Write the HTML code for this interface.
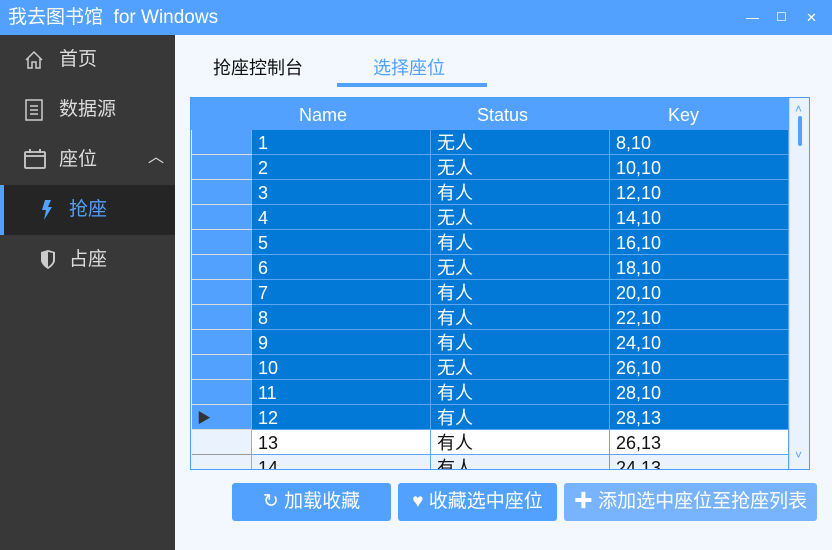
<!DOCTYPE html>
<html><head><meta charset="utf-8"><style>
*{margin:0;padding:0;box-sizing:border-box}
body{width:832px;height:550px;overflow:hidden;font-family:"Liberation Sans","Noto Sans CJK SC",sans-serif;background:#f3f8ff;position:relative}
.title{position:absolute;left:0;top:0;width:832px;height:35px;background:#52a1fe;color:#fff;font-size:19px;line-height:35px;padding-left:8px}
.wc{position:absolute;top:0;color:#fff;font-size:13px;line-height:35px}
.side{position:absolute;left:0;top:35px;width:175px;height:515px;background:#383838}
.it{position:absolute;left:0;width:175px;height:50px;color:#ddd;font-size:19px;line-height:50px}
.tab{position:absolute;top:54px;font-size:18px}
.grid{position:absolute;left:190px;top:97px;width:620px;height:373px;border:1px solid #4a9cf5;background:#eaf2fd;overflow:hidden}
.hdr{position:absolute;left:0;top:0;width:598px;height:32px;background:#52a1fe;color:#fff;font-size:18px;line-height:34px}
.row{position:absolute;left:0;width:598px;height:25px;font-size:18px;line-height:27px}
.rh{position:absolute;left:1px;top:0;width:60px;height:25px;border-bottom:1px solid #ddd;border-right:1px solid #aaa}
.c{position:absolute;top:0;height:25px;border-right:1px solid #5aa6f0;border-bottom:1px solid #5aa6f0;padding-left:6px}
.sb{position:absolute;left:598px;top:0;width:20px;height:371px;background:#eaf2fd;border-left:1px solid #cde}
.btn{position:absolute;top:483px;height:38px;background:#52a1fe;color:#fff;font-size:19px;line-height:38px;text-align:center;border-radius:3px}
</style></head><body>
<div class="title">我去图书馆&nbsp; for Windows</div>
<div class="wc" style="left:746px">—</div>
<div class="wc" style="left:776px;font-size:12px">☐</div>
<div class="wc" style="left:806px">✕</div>
<div class="side">
<div class="it" style="top:0"><svg style="position:absolute;left:24px;top:15px" width="20" height="20" viewBox="0 0 20 20" fill="none" stroke="#ccc" stroke-width="1.5"><path d="M2 10L10 2L18 10M4 8V18H8V12H12V18H16V8"/></svg><span style="position:absolute;left:59px">首页</span></div>
<div class="it" style="top:50px"><svg style="position:absolute;left:25px;top:14px" width="18" height="22" viewBox="0 0 18 22" fill="none" stroke="#ccc" stroke-width="1.5"><rect x="1" y="1" width="16" height="20"/><path d="M5 7H13M5 11H13M5 15H13"/></svg><span style="position:absolute;left:59px">数据源</span></div>
<div class="it" style="top:100px"><svg style="position:absolute;left:24px;top:13px" width="22" height="22" viewBox="0 0 22 22" fill="none" stroke="#ccc" stroke-width="1.8"><rect x="1" y="4" width="20" height="16" rx="1"/><path d="M1 8H21M6 1V5M16 1V5"/></svg><span style="position:absolute;left:59px">座位</span><span style="position:absolute;left:148px;top:-2px;font-size:16px">︿</span></div>
<div class="it" style="top:150px;background:#252525;color:#52a1fe"><div style="position:absolute;left:0;top:0;width:4px;height:50px;background:#52a1fe"></div><svg style="position:absolute;left:41px;top:15px" width="12" height="20" viewBox="0 0 12 20"><path d="M4 0H10L7 7H11L3 20L5 10H1Z" fill="#52a1fe"/></svg><span style="position:absolute;left:69px">抢座</span></div>
<div class="it" style="top:200px"><svg style="position:absolute;left:40px;top:15px" width="16" height="20" viewBox="0 0 16 20"><path d="M1 2L8 0L15 2V10C15 15 8 19 8 19C8 19 1 15 1 10Z" fill="#ccc"/><path d="M8 2V17C12 14 13 12 13 10V3Z" fill="#383838"/></svg><span style="position:absolute;left:69px">占座</span></div>
</div>
<div class="tab" style="left:213px;color:#111">抢座控制台</div>
<div class="tab" style="left:373px;color:#52a1fe">选择座位</div>
<div style="position:absolute;left:337px;top:83px;width:150px;height:4px;background:#52a1fe"></div>
<div class="grid">
<div class="hdr"><span style="position:absolute;left:108px">Name</span><span style="position:absolute;left:286px">Status</span><span style="position:absolute;left:477px">Key</span></div>
<div id="rows"></div>
<div class="sb"><div style="position:absolute;left:5px;top:4px;color:#52a1fe;font-size:12px">˄</div><div style="position:absolute;left:8px;top:18px;width:4px;height:30px;background:#52a1fe;border-radius:2px"></div><div style="position:absolute;left:5px;top:350px;color:#52a1fe;font-size:12px">˅</div></div>
</div>
<div class="btn" style="left:232px;width:159px">↻ 加载收藏</div>
<div class="btn" style="left:398px;width:159px">♥ 收藏选中座位</div>
<div class="btn" style="left:564px;width:253px;background:#78b4fe">✚ 添加选中座位至抢座列表</div>
<script>
var d=[["1","无人","8,10"],["2","无人","10,10"],["3","有人","12,10"],["4","无人","14,10"],["5","有人","16,10"],["6","无人","18,10"],["7","有人","20,10"],["8","有人","22,10"],["9","有人","24,10"],["10","无人","26,10"],["11","有人","28,10"],["12","有人","28,13"],["13","有人","26,13"],["14","有人","24,13"]];
var h="";d.forEach(function(r,i){var s=i<12;var bg=s?"#0279d6":(i==12?"#fff":"#eaf2fd");var col=s?"#fff":"#111";var rb=s?"#52a1fe":"#eaf2fd";
h+='<div class="row" style="top:'+(32+i*25)+'px;color:'+col+'"><div class="rh" style="background:'+rb+';border-bottom-color:'+(s?"#ddd":"#999")+'">'+(i==11?'<span style="position:absolute;left:5px;top:0;color:#333;font-size:14px">▶</span>':'')+'</div>';
[[61,179],[240,179],[419,179]].forEach(function(c,j){h+='<div class="c" style="left:'+c[0]+'px;width:'+c[1]+'px;background:'+bg+'">'+r[j]+'</div>'});h+='</div>'});
document.getElementById("rows").innerHTML=h;
</script>
</body></html>
